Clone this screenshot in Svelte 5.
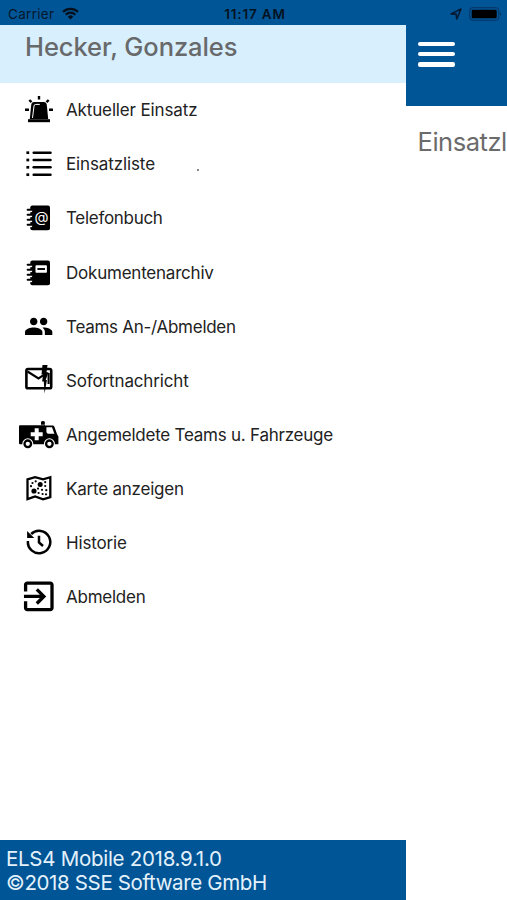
<script lang="ts">
  type Entry = { icon: string; label: string; spacing: number };

  // spacing: letter-spacing in px
  const entries: Entry[] = [
    { icon: "siren", label: "Aktueller Einsatz", spacing: -0.14 },
    { icon: "list", label: "Einsatzliste", spacing: -0.12 },
    { icon: "phonebook", label: "Telefonbuch", spacing: -0.3 },
    { icon: "documents", label: "Dokumentenarchiv", spacing: -0.22 },
    { icon: "teams", label: "Teams An-/Abmelden", spacing: -0.27 },
    { icon: "message", label: "Sofortnachricht", spacing: -0.14 },
    { icon: "ambulance", label: "Angemeldete Teams u. Fahrzeuge", spacing: -0.24 },
    { icon: "map", label: "Karte anzeigen", spacing: -0.22 },
    { icon: "history", label: "Historie", spacing: -0.15 },
    { icon: "logout", label: "Abmelden", spacing: -0.25 },
  ];
</script>

<div class="screen">
  <header class="status">
    <div class="carrier">
      <span>Carrier</span>
      <svg width="17" height="13" viewBox="0 0 17 13" fill="none" stroke="#06101c">
        <path d="M1 4.9a10.6 10.6 0 0 1 15 0M3.7 7.7a6.8 6.8 0 0 1 9.6 0" stroke-width="2.2" />
        <path d="M5.7 9.7a4 4 0 0 1 5.6 0L8.5 12.5z" fill="#06101c" stroke="none" />
      </svg>
    </div>
    <span class="time">11:17 AM</span>
    <div class="indicators">
      <svg width="12" height="12" viewBox="0 0 12 12" fill="none" stroke="#041a33" stroke-width="1.6">
        <path d="M1 5.9 11 1 6.8 11 6.1 6.1z" stroke-linejoin="round" />
      </svg>
      <svg width="33" height="14" viewBox="0 0 33 14">
        <rect x=".7" y=".7" width="29" height="12.6" rx="3.5" fill="none" stroke="#063a6c" stroke-width="1.2" />
        <rect x="2.7" y="2.7" width="25" height="8.6" rx="1.3" fill="#000" />
        <path d="M31 4.7q2.4 2.3 0 4.6z" fill="#063a6c" />
      </svg>
    </div>
  </header>

  <div class="content">
    <aside class="drawer">
      <div class="user">Hecker, Gonzales</div>
      <nav>
        {#each entries as { icon, label, spacing }}
          <div class="entry">
            <svg class="icon" viewBox="0 0 40 40">
              {#if icon === "siren"}
                <path d="M10.8 29 12.2 15q.3-2.9 3-2.9h9.6q2.7 0 3 2.9L29.2 29z" />
                <path d="M9 29.2h22v3H9z" />
                <path d="M13.5 28 15 16q.2-1.6 1.8-1.6h4" fill="none" stroke="#fff" stroke-width="1" />
                <path d="M20 6v3.4M6 19.8h4M30 19.8h4M10.3 10l2.2 2.2M29.7 10l-2.2 2.2" stroke="#000" stroke-width="2.4" />
              {:else if icon === "list"}
                {#each [8.7, 16, 23.3, 30.7] as y}
                  <path d="M7.4 {y}h2.8" stroke="#000" stroke-width="2.7" />
                  <path d="M14.7 {y}h16.8" stroke="#000" stroke-width="2.5" stroke-linecap="round" />
                {/each}
              {:else if icon === "phonebook" || icon === "documents"}
                <rect x="11.3" y="7.5" width="19.7" height="24.8" rx="2" />
                {#each [12.2, 17.2, 22.2, 27.2] as y}
                  <path d="M10.5 {y + 0.5}h2.6" stroke="#fff" stroke-width="2.8" />
                  <path d="M8.6 {y - 0.4}h4.2" stroke="#000" stroke-width="1.9" stroke-linecap="round" />
                {/each}
                {#if icon === "phonebook"}
                  <text x="22.6" y="24" text-anchor="middle" font-size="14.5" fill="#fff">@</text>
                {:else}
                  <rect x="16.5" y="12.2" width="11.4" height="7.6" rx=".8" fill="#fff" />
                  <path d="M18.4 16h7.6" stroke="#000" stroke-width="1.9" />
                {/if}
              {:else if icon === "teams"}
                <path transform="translate(4.8 4.5) scale(1.24)" d="M16 11c1.66 0 2.99-1.34 2.99-3S17.66 5 16 5s-3 1.34-3 3 1.34 3 3 3zm-8 0c1.66 0 2.99-1.34 2.99-3S9.66 5 8 5 5 6.34 5 8s1.34 3 3 3zm0 2c-2.33 0-7 1.17-7 3.5V19h14v-2.5c0-2.33-4.67-3.5-7-3.5zm8 0c-.29 0-.62.02-.97.05 1.16.84 1.97 1.97 1.97 3.45V19h6v-2.5c0-2.33-4.67-3.5-7-3.5z" />
              {:else if icon === "message"}
                <rect x="7.4" y="8" width="24.8" height="19.3" rx="1.6" fill="none" stroke="#000" stroke-width="2.6" />
                <path d="m8.5 10.5 11 6.9 5-3.3M29.6 12v11" fill="none" stroke="#000" stroke-width="2.1" />
                <path d="M23.5 4h5l-1 7.2h2L26.7 19h1.2l-2.3 13.6-.8-12h-1.7l1-7h-1.6z" />
              {:else if icon === "ambulance"}
                <path d="M1 10.3h25v19H1q-1 0-1-1v-17q0-1 1-1z" />
                <path d="M25 10.5h8.6q1.3 0 1.8 1.2l2.7 7.5 1.3 2.3v7.8H25z" />
                <path d="M22 9.8V7.2q0-1.2 1.9-1.2t1.9 1.2v2.6z" />
                <path d="M27.4 12.2h5.6l2.4 6.5h-5.8q-2.2 0-2.2-2.2z" fill="#fff" />
                <path d="M17.7 13.3v12M11.7 19.3h12" stroke="#fff" stroke-width="4" />
                {#each [8.8, 30.4] as x}
                  <circle cx={x} cy="28.8" r="5.5" fill="#fff" />
                  <circle cx={x} cy="28.8" r="3.3" fill="#fff" stroke="#000" stroke-width="2.3" />
                {/each}
              {:else if icon === "map"}
                <path d="m8.5 10.3 7.6-2.2 8 2.2 7.2-2.1v20l-7.2 2.2-8-3-7.6 2.8z" fill="none" stroke="#000" stroke-width="2.3" />
                <circle cx="21.2" cy="15.5" r="2.5" />
                <circle cx="15" cy="22" r="2.6" />
                {#each [[13.5, 14], [16.7, 12.3], [12, 17.2], [26.2, 13.2], [26.2, 17], [19, 19.6], [23, 20.8], [27.3, 21.2], [19.6, 24], [23.6, 25], [27, 25.3]] as [x, y]}
                  <circle cx={x} cy={y} r="1.1" />
                {/each}
              {:else if icon === "history"}
                <path d="M8.9 18a11.2 11.2 0 1 0 3.3-7" fill="none" stroke="#000" stroke-width="2.5" />
                <path d="M8.1 8v7h7.2z" />
                <path d="M20 12.8v6.7l4 3.5" fill="none" stroke="#000" stroke-width="2.5" />
              {:else}
                <path transform="translate(0 -.4) scale(1.65)" d="M10.09 15.59 11.5 17l5-5-5-5-1.41 1.41L12.67 11H3v2h9.67zM19 3H5c-1.11 0-2 .9-2 2v4h2V5h14v14H5v-4H3v4c0 1.1.89 2 2 2h14c1.1 0 2-.9 2-2V5c0-1.1-.9-2-2-2z" />
              {/if}
            </svg>
            <span style="letter-spacing: {spacing}px">{label}</span>
            {#if icon === "list"}<i class="speck"></i>{/if}
          </div>
        {/each}
      </nav>
      <footer>
        <div class="version">ELS4 Mobile 2018.9.1.0</div>
        <div class="copyright">©2018 SSE Software GmbH</div>
      </footer>
    </aside>

    <main>
      <div class="toolbar">
        <div class="burger"><i></i><i></i><i></i></div>
      </div>
      <h1>Einsatzl</h1>
    </main>
  </div>
</div>

<style>
  :global(body) {
    margin: 0;
    background: #fff;
  }
  .screen {
    width: 507px;
    height: 900px;
    display: flex;
    flex-direction: column;
    overflow: hidden;
    font-family: Inter, "Liberation Sans", sans-serif;
    background: #fff;
  }
  .status {
    flex: none;
    height: 25px;
    box-sizing: border-box;
    padding: 2px 5px 0 8px;
    display: grid;
    grid-template-columns: 1fr auto 1fr;
    align-items: center;
    background: #005596;
    color: #06182c;
    font-size: 13.5px;
  }
  .carrier {
    display: flex;
    align-items: center;
    gap: 8px;
    letter-spacing: 0.3px;
  }
  .time {
    color: #04121f;
    font-weight: 600;
    letter-spacing: 0.8px;
  }
  .indicators {
    display: flex;
    justify-content: flex-end;
    align-items: center;
    gap: 7px;
  }
  .content {
    flex: 1;
    display: flex;
    min-height: 0;
  }
  .drawer {
    flex: none;
    width: 405.5px;
    display: flex;
    flex-direction: column;
  }
  .user {
    height: 57.5px;
    box-sizing: border-box;
    padding: 6px 0 0 25px;
    background: #d8effd;
    color: #68696b;
    font-size: 25.5px;
    font-weight: 500;
    line-height: 32px;
    letter-spacing: -0.07px;
  }
  nav {
    flex: 1;
    padding-top: 0.5px;
  }
  .entry {
    height: 54.17px;
    display: flex;
    align-items: center;
    padding-left: 19px;
    color: #222;
    font-size: 17px;
    white-space: nowrap;
  }
  .icon {
    width: 40px;
    height: 40px;
    margin-right: 7px;
  }
  .speck {
    width: 2px;
    height: 2px;
    margin: 11px 0 0 42px;
    background: #888;
  }
  footer {
    height: 60px;
    box-sizing: border-box;
    padding: 6.5px 0 0 6px;
    background: #005596;
    color: #e4f1fb;
    font-size: 20.5px;
    line-height: 24.5px;
    white-space: nowrap;
  }
  .version {
    letter-spacing: -0.28px;
  }
  .copyright {
    letter-spacing: -0.36px;
  }
  main {
    flex: 1;
    min-width: 0;
    overflow: hidden;
  }
  .toolbar {
    height: 81px;
    box-sizing: border-box;
    padding: 17px 0 0 12px;
    background: #005596;
  }
  .burger {
    width: 37px;
    display: flex;
    flex-direction: column;
    gap: 6px;
  }
  .burger i {
    height: 4.2px;
    border-radius: 2px;
    background: #fff;
  }
  h1 {
    margin: 20px 0 0 12px;
    color: #6b6b6b;
    font-size: 25.5px;
    font-weight: 400;
    line-height: 32px;
    letter-spacing: -0.45px;
    white-space: nowrap;
  }
</style>
